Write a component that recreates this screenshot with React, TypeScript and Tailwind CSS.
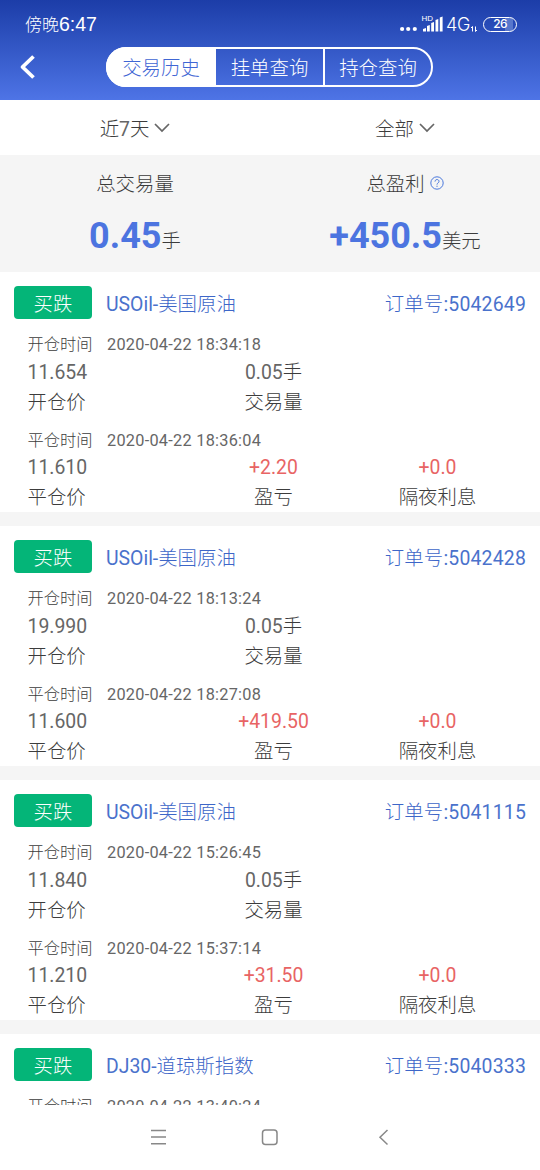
import { ReactNode } from "react";

type Order = {
    id: string;
    symbol: string;
    lots: string;
    openTime: string;
    openPrice: string;
    closeTime: string;
    closePrice: string;
    profit: string;
    swap: string;
}

const orders: Order[] = [
    { id: '5042649', symbol: 'USOil-美国原油', lots: '0.05', openTime: '2020-04-22 18:34:18', openPrice: '11.654', closeTime: '2020-04-22 18:36:04', closePrice: '11.610', profit: '+2.20', swap: '+0.0' },
    { id: '5042428', symbol: 'USOil-美国原油', lots: '0.05', openTime: '2020-04-22 18:13:24', openPrice: '19.990', closeTime: '2020-04-22 18:27:08', closePrice: '11.600', profit: '+419.50', swap: '+0.0' },
    { id: '5041115', symbol: 'USOil-美国原油', lots: '0.05', openTime: '2020-04-22 15:26:45', openPrice: '11.840', closeTime: '2020-04-22 15:37:14', closePrice: '11.210', profit: '+31.50', swap: '+0.0' },
]

const StatusBar = () => (
    <div className="h-[47px] pl-[25px] pr-[23px] flex items-center justify-between">
        <p className="flex items-center leading-6">
            <span className="text-[17px] font-['Noto_Sans_CJK_SC',sans-serif] font-light">傍晚</span>
            <span className="text-[19.5px] pt-px font-['Liberation_Sans',sans-serif]">6:47</span>
        </p>
        <div className="flex items-center">
            <svg width="46" height="20" viewBox="0 0 46 20" fill="currentColor">
                <circle cx="1.500" cy="15" r="2.1" transform="translate(.6 0)" />
                <circle cx="8.200" cy="15" r="2.1" />
                <circle cx="14.800" cy="15" r="2.1" />
                <path d="M23 17.500v-2.500l3-1v3.500zM27 17.500v-5.500l2.800-1v6.500zM31.200 17.500V9l2.800-1v9.500zM35.500 17.500V6l2.800-1v12.500zM39.800 17.500V3.500l2.800-1v15z" />
                <text x="21.500" y="7" fontSize="7" fontFamily="Liberation Sans, sans-serif" textLength="11.500" lengthAdjust="spacingAndGlyphs">HD</text>
            </svg>
            <span className="pt-0.5 w-[25px] text-[18px] leading-5 font-light tracking-[-0.3px] font-['Inter',sans-serif]">4G</span>
            <svg width="7" height="20" viewBox="0 0 7 20" fill="none" stroke="currentColor" strokeWidth="1">
                <path d="M1.500 12.500v5M0 14l1.500-1.500M4.500 12.500v5M4.500 17.500L6 16" />
            </svg>
            <div className="ml-[5px] mt-px w-[34px] h-[15px] border-[1.5px] border-white rounded-full flex items-center justify-center text-[12px] leading-none font-medium tracking-[-0.8px] font-['Inter',sans-serif] bg-[linear-gradient(to_right,transparent_66%,#5877cc_66%,#5877cc_90%,transparent_90%)]">26</div>
        </div>
    </div>
)

const Tabs = () => (
    <div className="ml-[106px] w-[327px] h-[40px] flex rounded-full border-2 border-white text-[19.4px] font-light">
        <button className="w-[110px] -my-0.5 -ml-0.5 pt-1 rounded-l-full bg-white text-[#3f66d4]">交易历史</button>
        <button className="w-[109px] pt-1 border-r-2 border-white">挂单查询</button>
        <button className="flex-1 pt-1">持仓查询</button>
    </div>
)

const Filter = ({ children }: { children: ReactNode }) => (
    <button className="w-1/2 flex items-center justify-center gap-[5px]">
        <span className="pt-[5px]">{children}</span>
        <svg width="16" height="10" viewBox="0 0 16 10" fill="none" stroke="#666" strokeWidth="1.700">
            <path d="M1 1l7 7 7-7" />
        </svg>
    </button>
)

const Stat = ({ title, value, unit, help }: { title: string, value: string, unit: string, help?: boolean }) => (
    <div className="w-1/2 pt-[14px] flex flex-col items-center">
        <div className="h-7 flex items-center gap-[5px] font-light text-[#3c3c3c]">
            <span className="pt-[3px]">{title}</span>
            {help && (
                <svg width="14" height="14" viewBox="0 0 14 14" fill="none" stroke="#4a78dc" strokeWidth="1">
                    <circle cx="7" cy="7" r="6.200" />
                    <path d="M5 5.600c0-2.800 4-2.600 4-.2C9 7 7 6.900 7 8.600M7 9.700v1.200" />
                </svg>
            )}
        </div>
        <div className="mt-[15px] h-12 flex items-baseline">
            <span className="text-[36px] leading-[49px] font-bold text-[#4c74e0]">{value}</span>
            <span className="font-light text-[#3c3c3c]">{unit}</span>
        </div>
    </div>
)

const Time = ({ label, value }: { label: string, value: string }) => (
    <div className="h-6 pt-0.5 flex items-center text-[16.3px]">
        <span className="w-[79.5px] font-light text-[#3c3c3c]">{label}</span>
        <span className="tracking-[0.27px]">{value}</span>
    </div>
)

const Cell = ({ value, unit, label, red }: { value: string, unit?: string, label: string, red?: boolean }) => (
    <div className="w-[164px] flex flex-col items-center">
        <span className={red ? 'h-[30px] leading-[32px] text-[#e86464]' : 'h-[30px] leading-[32px]'}>
            {value}{unit && <span className="font-light text-[#3c3c3c]">{unit}</span>}
        </span>
        <span className="h-[29px] leading-[32px] font-light text-[#3c3c3c]">{label}</span>
    </div>
)

const Price = ({ value, label }: { value: string, label: string }) => (
    <div className="w-[164px] flex flex-col">
        <span className="h-[30px] leading-[32px]">{value}</span>
        <span className="h-[29px] leading-[32px] font-light text-[#3c3c3c]">{label}</span>
    </div>
)

const CardHead = ({ symbol, id }: { symbol: string, id: string }) => (
    <div className="h-[33px] px-[14px] flex items-center text-[#4a72cc]">
        <span className="w-[78px] h-[33px] pt-[5px] flex items-center justify-center rounded bg-[#04b578] text-white font-light">买跌</span>
        <span className="ml-[14px] pt-[5px]">
            {symbol.split('-')[0]}-<span className="font-light text-[#3d66c8]">{symbol.split('-')[1]}</span>
        </span>
        <span className="ml-auto pt-[5px] tracking-[0.2px]"><span className="font-light text-[#3d66c8]">订单号</span>:{id}</span>
    </div>
)

const OrderCard = ({ order }: { order: Order }) => (
    <div className="h-[240px] shrink-0 pt-[14px] bg-white">
        <CardHead symbol={order.symbol} id={order.id} />
        <div className="mt-[13px] pl-[27.500px]">
            <Time label="开仓时间" value={order.openTime} />
            <div className="mt-px flex">
                <Price value={order.openPrice} label="开仓价" />
                <Cell value={order.lots} unit="手" label="交易量" />
            </div>
            <div className="h-3" />
            <Time label="平仓时间" value={order.closeTime} />
            <div className="flex">
                <Price value={order.closePrice} label="平仓价" />
                <Cell value={order.profit} label="盈亏" red />
                <Cell value={order.swap} label="隔夜利息" red />
            </div>
        </div>
    </div>
)

const App = () => {
    return (
        <div className="w-[540px] h-[1170px] overflow-hidden flex flex-col bg-white text-[19.4px] text-[#666] font-['Roboto','Noto_Sans_CJK_SC',sans-serif]">
            <header className="h-[100px] shrink-0 bg-linear-to-b from-[#1c3da8] to-[#4e74e6] text-white">
                <StatusBar />
                <div className="flex items-center">
                    <svg className="ml-[19px] -mr-[35px]" width="16" height="26" viewBox="0 0 16 26" fill="none" stroke="currentColor" strokeWidth="3.800" strokeLinejoin="round">
                        <path d="M14.500 2.500L3.500 13l11 10.500" />
                    </svg>
                    <Tabs />
                </div>
            </header>
            <div className="h-[55px] shrink-0 flex font-light text-[#3c3c3c]">
                <Filter>近<span className="font-normal text-[#666]">7</span>天</Filter>
                <Filter>全部</Filter>
            </div>
            <div className="h-[117px] shrink-0 flex bg-[#f5f5f5]">
                <Stat title="总交易量" value="0.45" unit="手" />
                <Stat title="总盈利" value="+450.5" unit="美元" help />
            </div>
            <main className="h-[833px] shrink-0 overflow-hidden flex flex-col gap-[14px] bg-[#f5f5f5]">
                {orders.map((order) => <OrderCard key={order.id} order={order} />)}
                {/* next card, scrolled under the navigation bar */}
                <div className="h-[71px] shrink-0 pt-[14px] bg-white overflow-hidden">
                    <CardHead symbol="DJ30-道琼斯指数" id="5040333" />
                    <div className="mt-[13px] pl-[27.500px]">
                        <Time label="开仓时间" value="2020-04-22 13:40:24" />
                    </div>
                </div>
            </main>
            <nav className="h-[65px] shrink-0 flex pl-[150px] pt-[24px] gap-[95px] text-[#888]">
                <svg width="16" height="16" viewBox="0 0 16 16" stroke="currentColor" strokeWidth="1.500">
                    <path d="M1 1.500h15M1 8h15M1 14.700h15" />
                </svg>
                <svg width="17" height="17" viewBox="0 0 17 17" fill="none" stroke="currentColor" strokeWidth="1.500">
                    <rect x="1.500" y="1" width="14.500" height="14.500" rx="3" />
                </svg>
                <svg className="ml-[5px]" width="12" height="17" viewBox="0 0 12 17" fill="none" stroke="currentColor" strokeWidth="1.500">
                    <path d="M9.500 1L2 8.300l7.500 7.200" />
                </svg>
            </nav>
        </div>
    )
}
export default App
